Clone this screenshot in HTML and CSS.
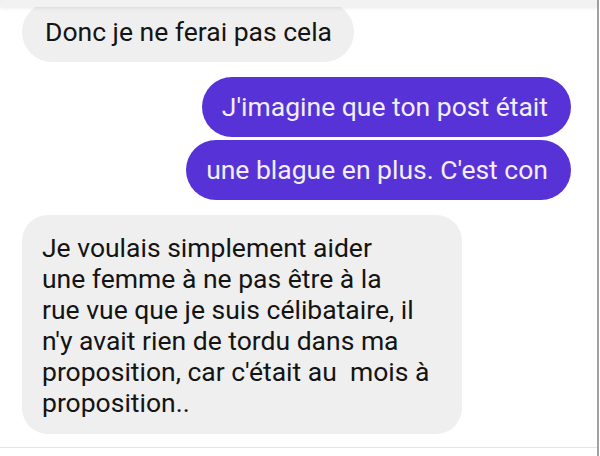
FILE: index.html
```html
<!DOCTYPE html>
<html lang="fr">
<head>
<meta charset="utf-8">
<link rel="stylesheet" href="styles.css">
</head>
<body>
<div class="screen">
  <div class="topbar"></div>
  <div class="messages">
    <div class="row left">
      <div class="bubble received single">Donc je ne ferai pas cela</div>
    </div>
    <div class="row right group">
      <div class="bubble sent first">J'imagine que ton post était</div>
      <div class="bubble sent last">une blague en plus. C'est con</div>
    </div>
    <div class="row left">
      <div class="bubble received long">Je voulais simplement aider<br>une femme à ne pas être à la<br>rue vue que je suis célibataire, il<br>n'y avait rien de tordu dans ma<br>proposition, car c'était au&nbsp; mois à<br>proposition..</div>
    </div>
  </div>
  <div class="composer-edge"></div>
</div>
</body>
</html>
```

FILE: styles.css
```css
html, body {
  margin: 0;
  padding: 0;
  background: #ffffff;
}

body {
  font-family: Roboto, "Noto Sans", "Liberation Sans", sans-serif;
  width: 600px;
  height: 456px;
  overflow: hidden;
}

.screen {
  position: relative;
  width: 597px;
  height: 456px;
  border-right: 2px solid #a2a2a2;
  box-sizing: content-box;
  display: flex;
  flex-direction: column;
  background: #ffffff;
}

.topbar {
  position: absolute;
  top: 0;
  left: 0;
  right: 0;
  height: 7px;
  background: #f2f2f2;
  box-shadow: 0 1px 4px rgba(0, 0, 0, 0.09);
  z-index: 2;
}

.messages {
  display: flex;
  flex-direction: column;
  padding: 2px 26px 0 22px;
  height: 448px;
  box-sizing: border-box;
}

.row {
  display: flex;
  flex-direction: column;
}

.row.left {
  align-items: flex-start;
}

.row.right {
  align-items: flex-end;
  margin-top: 15px;
  gap: 3px;
}

.bubble {
  font-size: 26.5px;
  line-height: 31px;
  white-space: nowrap;
  box-sizing: border-box;
}

.received {
  background: #efefef;
  color: #141414;
}

.single {
  height: 60px;
  padding: 14px 22px 0 23px;
  border-radius: 30px;
}

.sent {
  background: #5733d7;
  color: #f2eefc;
  height: 60px;
  padding: 14px 23px 0 20px;
  border-radius: 30px;
}

.long {
  margin-top: 15px;
  width: 440px;
  padding: 17px 20px 16px 20px;
  border-radius: 26px;
}

.composer-edge {
  height: 8px;
  border-top: 1px solid #e6e6e6;
  background: #ffffff;
}
```
